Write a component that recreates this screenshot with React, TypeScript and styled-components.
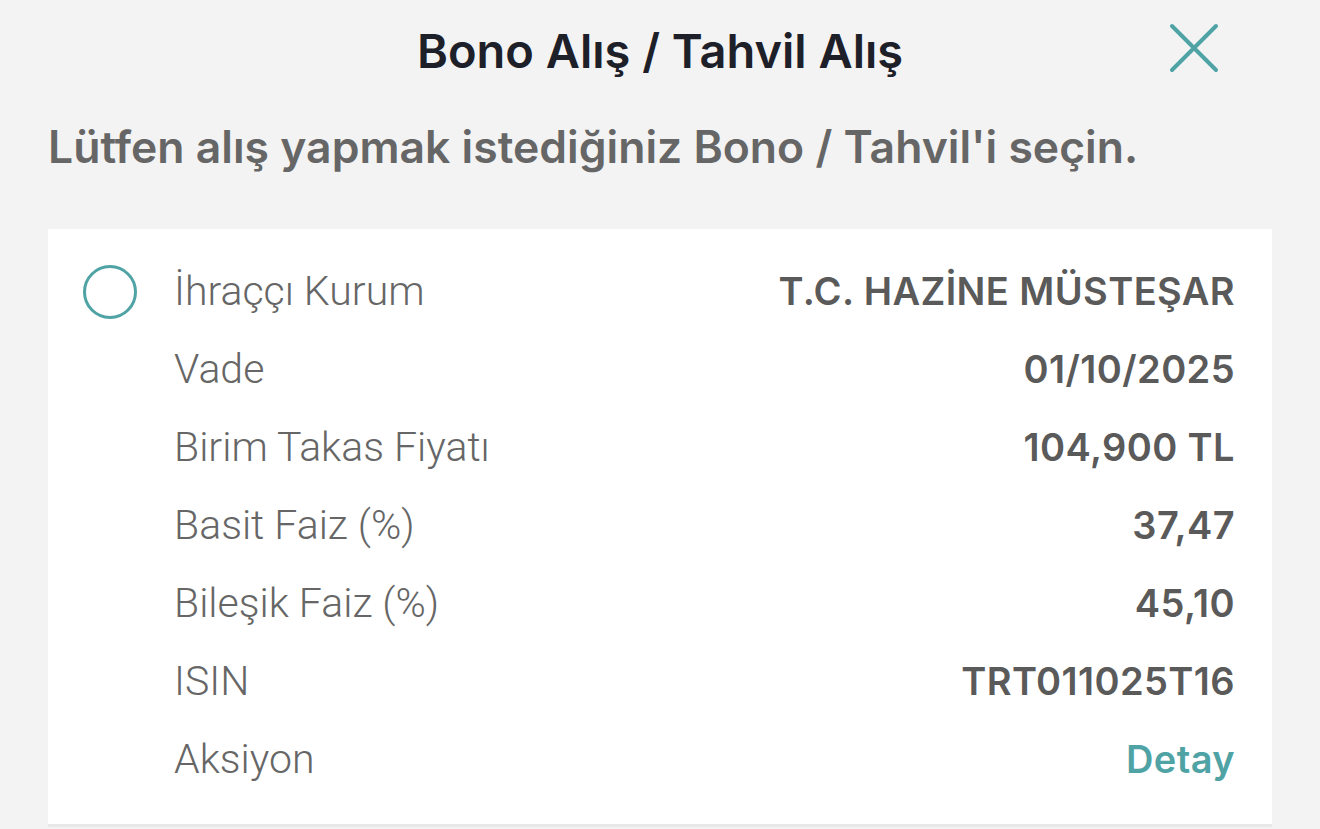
import React from "react";
import styled, { createGlobalStyle } from "styled-components";

const rows = [
  { label: "İhraççı Kurum", value: "T.C. HAZİNE MÜSTEŞAR" },
  { label: "Vade", value: "01/10/2025" },
  { label: "Birim Takas Fiyatı", value: "104,900 TL" },
  { label: "Basit Faiz (%)", value: "37,47" },
  { label: "Bileşik Faiz (%)", value: "45,10" },
  { label: "ISIN", value: "TRT011025T16" },
  { label: "Aksiyon", value: "Detay", link: true },
];

const GlobalStyle = createGlobalStyle`
  html, body {
    margin: 0;
    padding: 0;
    background: #f3f3f3;
    overflow: hidden;
  }
`;

const App = () => {
  return (
    <Page>
      <GlobalStyle />
      <Header>
        <Title>Bono Alış / Tahvil Alış</Title>
        <CloseButton aria-label="Kapat">
          <svg width="52" height="52" viewBox="0 0 52 52">
            <path
              d="M4 4 L48 48 M48 4 L4 48"
              stroke="#4fa3a5"
              strokeWidth="4"
              strokeLinecap="round"
              fill="none"
            />
          </svg>
        </CloseButton>
      </Header>
      <Subtitle>Lütfen alış yapmak istediğiniz Bono / Tahvil'i seçin.</Subtitle>
      <Card>
        <Radio />
        <Rows>
          {rows.map((row) => (
            <Row key={row.label}>
              <Label>{row.label}</Label>
              <Value $link={row.link}>{row.value}</Value>
            </Row>
          ))}
        </Rows>
      </Card>
    </Page>
  );
};

export default App;

const Page = styled.div`
  width: 1320px;
  height: 829px;
  background: #f3f3f3;
  padding: 0 48px;
  box-sizing: border-box;
`;

const Header = styled.div`
  position: relative;
  height: 100px;
  display: flex;
  align-items: center;
  justify-content: center;
`;

const Title = styled.h1`
  margin: 0;
  color: #1e2029;
  font-family: Inter, "Noto Sans", sans-serif;
  font-size: 47px;
  font-weight: 600;
`;

const CloseButton = styled.button`
  position: absolute;
  right: 52px;
  top: 22px;
  padding: 0;
  border: none;
  background: transparent;
  display: flex;
`;

const Subtitle = styled.p`
  margin: 0;
  height: 129px;
  padding-top: 20px;
  box-sizing: border-box;
  color: #666666;
  font-family: Inter, "Noto Sans", sans-serif;
  font-size: 44.5px;
  font-weight: 600;
`;

const Card = styled.div`
  background: #ffffff;
  display: flex;
  align-items: flex-start;
  padding: 23px 37px 26px 35px;
  border-bottom: 3px solid #e8e8e8;
  gap: 37px;
`;

const Radio = styled.div`
  width: 48px;
  height: 48px;
  border: 3px solid #4fa3a5;
  border-radius: 50%;
  margin-top: 13px;
  flex-shrink: 0;
`;

const Rows = styled.div`
  flex: 1;
  display: flex;
  flex-direction: column;
`;

const Row = styled.div`
  height: 78px;
  display: flex;
  align-items: center;
  justify-content: space-between;
`;

const Label = styled.span`
  color: #666666;
  font-family: Roboto, "Noto Sans", sans-serif;
  font-size: 41px;
  font-weight: 300;
`;

const Value = styled.span<{ $link?: boolean }>`
  color: ${(p) => (p.$link ? "#4fa3a5" : "#5a5a5a")};
  font-family: Inter, "Noto Sans", sans-serif;
  font-size: 38px;
  font-weight: 600;
  letter-spacing: 0.4px;
`;
